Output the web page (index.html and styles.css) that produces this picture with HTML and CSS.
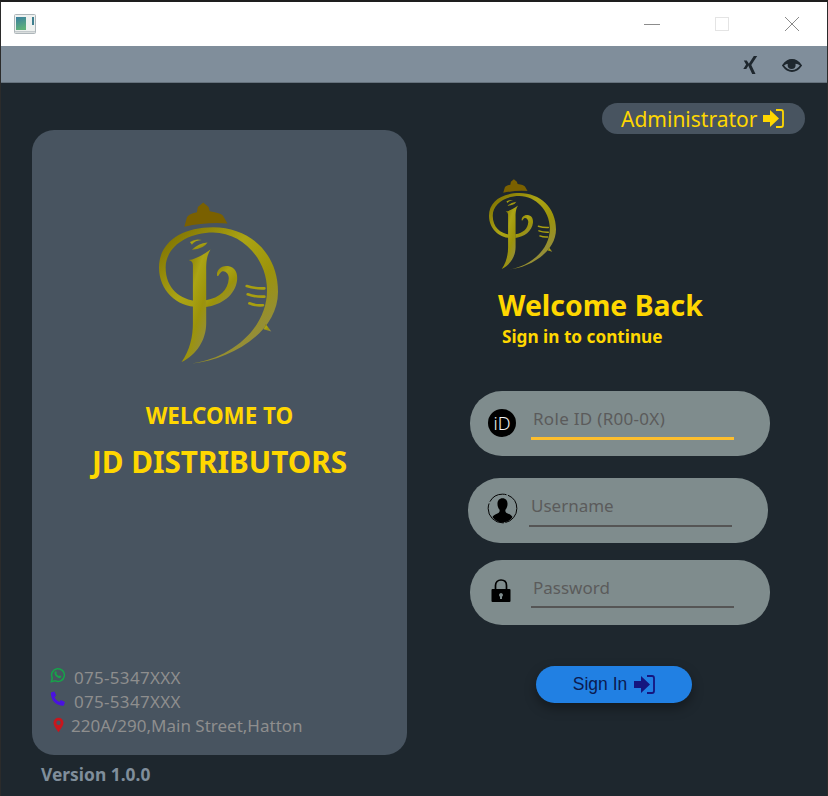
FILE: index.html
```html
<!DOCTYPE html>
<html lang="en">
<head>
<meta charset="utf-8">
<title>JD Distributors</title>
<link rel="stylesheet" href="styles.css">
</head>
<body>
<svg class="defs" width="0" height="0" aria-hidden="true">
  <defs>
    <linearGradient id="gold" x1="0.1" y1="0" x2="0.9" y2="1">
      <stop offset="0" stop-color="#7d7000"/>
      <stop offset="0.35" stop-color="#aba414"/>
      <stop offset="0.6" stop-color="#9c930a"/>
      <stop offset="1" stop-color="#8f8a5a"/>
    </linearGradient>
    <linearGradient id="panel" x1="0" y1="0" x2="0.3" y2="1">
      <stop offset="0" stop-color="#3a7fa0"/>
      <stop offset="1" stop-color="#5fb07a"/>
    </linearGradient>
    <symbol id="logo" viewBox="87 37 358 484">
      <g fill="url(#gold)">
        <path fill="#7a6000" d="M163 110 L171 82 Q174 72 201 66 L204 50 L220 37 L236 50 L240 63 Q272 68 279 76 L293 100 Q230 95 163 110 Z"/>
        <path d="M188 521 C300 510 445 430 445 305 C445 190 360 111 250 111 C150 111 87 160 87 232 C87 300 140 351 205 351 L205 334 C150 329 107 295 107 232 C107 172 170 127 250 127 C335 127 412 205 412 300 C412 420 300 505 188 521 Z"/>
        <path d="M176 210 C195 208 220 195 242 178 C232 195 229 210 229 240 L229 400 C229 450 200 495 155 517 C180 480 189 440 189 400 L189 225 Q189 213 176 210 Z"/>
        <path d="M228 331 C270 324 295 300 297 265 C297 250 285 240 275 245 C268 250 268 258 262 258 C258 240 275 225 295 228 C317 232 324 250 322 270 C317 315 275 346 228 351 Z"/>
        <path d="M186 179 Q205 160 233 157 Q222 176 186 179 Z"/>
        <path d="M180 156 Q195 144 216 150 Q195 151 186 164 Z"/>
        <path d="M408 402 L425 425 L402 418 Z"/>
      </g>
      <g fill="none" stroke="#a89f10" stroke-width="8" stroke-linecap="round">
        <path d="M351 288 Q375 296 404 295"/>
        <path d="M354 313 Q375 321 404 320"/>
        <path d="M359 340 Q378 348 400 346"/>
      </g>
    </symbol>
    <symbol id="signin" viewBox="0 0 21 19">
      <path d="M0 6 H7 V1 L16 9.500 L7 18 V13 H0 Z"/>
      <path d="M13 1 H18 Q20 1 20 3 V16 Q20 18 18 18 H13" fill="none" stroke="currentColor" stroke-width="1.800"/>
    </symbol>
  </defs>
</svg>

<div class="window">
  <span class="edge edge-l1"></span>
  <span class="edge edge-l2"></span>
  <span class="edge edge-l3"></span>
  <span class="edge edge-r1"></span>
  <header class="titlebar">
    <svg class="app-icon" viewBox="0 0 22 20">
      <rect x="0.5" y="0.5" width="21" height="19" rx="1" fill="#eef1ef" stroke="#aeb6ba"/>
      <rect x="2" y="3" width="10" height="13" fill="url(#panel)"/>
      <rect x="18" y="3" width="2" height="8" fill="#3f7f8f"/>
      <rect x="1" y="17" width="20" height="1.500" fill="#c3c9cc"/>
    </svg>
    <div class="win-controls">
      <svg class="win-btn" viewBox="0 0 16 16"><path d="M0 8.500H16" stroke="#8c8c8c" fill="none"/></svg>
      <svg class="win-btn" viewBox="0 0 16 16"><rect x="1.500" y="1.500" width="13" height="13" fill="none" stroke="#e4e4e4"/></svg>
      <svg class="win-btn" viewBox="0 0 16 16"><path d="M1 1L15 15M15 1L1 15" stroke="#8a8a8a" fill="none"/></svg>
    </div>
  </header>

  <div class="toolbar">
    <svg class="tool-icon xing" viewBox="0 0 15 18">
      <path fill="#1e272e" d="M0.800 4.500H3.800L6.200 8.300L3.300 13H0.300L3.100 8.400Z"/>
      <path fill="#1e272e" d="M10.800 0H14.200L8.300 9L12.500 18H9.200L5 9Z"/>
    </svg>
    <svg class="tool-icon eye" viewBox="0 0 20 13">
      <path fill="none" stroke="#1e272e" stroke-width="1.800" d="M1 6.500C4 2.200 7 1 10 1S16 2.200 19 6.500C16 10.800 13 12 10 12S4 10.800 1 6.500Z"/>
      <path fill="#1e272e" d="M1 6.500C4 2.200 7 0.600 10 0.600S16 2.200 19 6.500C15 3.800 5 3.800 1 6.500Z"/>
      <circle cx="9.600" cy="6" r="4" fill="#1e272e"/>
    </svg>
  </div>

  <main class="main">
    <div class="left-col">
      <section class="card">
        <svg class="logo-large"><use href="#logo"/></svg>
        <h2 class="welcome-to">WELCOME TO</h2>
        <h1 class="company">JD DISTRIBUTORS</h1>
        <ul class="contacts">
          <li class="contact">
            <svg class="c-icon" viewBox="0 0 18 18">
              <path fill="none" stroke="#17a34a" stroke-width="1.700" d="M1.500 16.500L2.600 12.400A7.200 7.200 0 1 1 5.500 15.400Z"/>
              <path fill="#17a34a" d="M6.300 4.900C7 4.600 7.300 5 7.600 6.200C7.800 6.900 7 7.200 7.200 7.700C7.700 8.700 8.600 9.600 9.900 10.200C10.400 10.300 10.700 9.400 11.300 9.600C12.600 10.200 13 10.500 12.700 11.300C12.300 12.400 10.800 12.900 9.600 12.400C7.500 11.600 5.900 10 5.100 7.900C4.700 6.600 5.200 5.400 6.300 4.900Z"/>
            </svg>
            <span class="phone">075-5347XXX</span>
          </li>
          <li class="contact">
            <svg class="c-icon" viewBox="0 0 18 18">
              <path fill="#4a12e0" d="M1.500 1.500L5 0.600L7 5L5 6.800C6 9.200 8 11.200 10.500 12.400L12.300 10.200L16.800 12.300L15.800 15.800C15.700 16.400 15.200 16.600 14.700 16.600C7.200 16.600 1 10.300 1 2.700C1 2.100 1.100 1.700 1.500 1.500Z"/>
            </svg>
            <span class="phone">075-5347XXX</span>
          </li>
          <li class="contact contact-address">
            <svg class="pin-icon" viewBox="0 0 12 17">
              <path fill="#c8161d" fill-rule="evenodd" d="M6 0.500A5.500 5.500 0 0 0 0.500 6C0.500 9 4 13.500 6 16.500C8 13.500 11.500 9 11.500 6A5.500 5.500 0 0 0 6 0.500ZM6 3.600A2.400 2.400 0 1 1 6 8.400A2.400 2.400 0 1 1 6 3.600Z"/>
            </svg>
            <span>220A/290,Main Street,Hatton</span>
          </li>
        </ul>
      </section>
      <div class="version">Version 1.0.0</div>
    </div>

    <div class="right-col">
      <button class="admin-btn" type="button">
        <span>Administrator</span>
        <svg class="signin-icon admin-icon"><use href="#signin"/></svg>
      </button>
      <svg class="logo-small"><use href="#logo"/></svg>
      <h2 class="welcome-back">Welcome Back</h2>
      <p class="subtitle">Sign in to continue</p>

      <form class="form">
        <div class="field field-role">
          <span class="orcid">iD</span>
          <div class="input input-active">Role ID (R00-0X)</div>
        </div>
        <div class="field field-user">
          <svg class="field-icon" viewBox="0 0 32 32">
            <circle cx="16" cy="16" r="14.800" fill="none" stroke="#000" stroke-width="1" stroke-dasharray="20 1.500 30 2"/>
            <path d="M16 5.500C12.600 5.500 10.800 8 10.800 11.200C10.800 14 11.800 16 13 17.400C13.200 19 12.800 20 11.800 20.600C9.800 21.600 7.200 22.200 5.600 24.800C8 28.400 12 30.600 16 30.600S24 28.400 26.400 24.800C24.800 22.200 22.200 21.600 20.200 20.600C19.200 20 18.800 19 19 17.400C20.200 16 21.200 14 21.200 11.200C21.200 8 19.400 5.500 16 5.500Z"/>
          </svg>
          <div class="input input-user">Username</div>
        </div>
        <div class="field field-pass">
          <svg class="field-icon lock" viewBox="0 0 20 24">
            <path d="M4.500 11V6.500C4.500 3.200 6.700 1 10 1S15.500 3.200 15.500 6.500V11" fill="none" stroke="#000" stroke-width="1.700"/>
            <path fill-rule="evenodd" d="M1.500 10H18.500Q19.500 10 19.500 11V22Q19.500 23 18.500 23H1.500Q0.500 23 0.500 22V11Q0.500 10 1.500 10ZM10 14A2 2 0 0 0 9 17.700V20H11V17.700A2 2 0 0 0 10 14Z"/>
          </svg>
          <div class="input input-pass">Password</div>
        </div>
        <button class="signin-btn" type="button">
          <span>Sign In</span>
          <svg class="signin-icon btn-icon"><use href="#signin"/></svg>
        </button>
      </form>
    </div>
  </main>
</div>
</body>
</html>
```

FILE: styles.css
```css
* { box-sizing: border-box; }
html, body { margin: 0; padding: 0; background: #1e272e; }
body { font-family: "Noto Sans", "Open Sans", sans-serif; overflow: hidden; }
.defs { position: absolute; }
ul { list-style: none; margin: 0; padding: 0; }
h1, h2, p { margin: 0; }

.window {
  position: relative;
  width: 828px;
  height: 796px;
  border-top: 2px solid #1e1e1e;
  border-left: 1px solid #2b2b2b;
  border-right: 1px solid #2b2b2b;
  display: flex;
  flex-direction: column;
  overflow: hidden;
}
.edge { position: absolute; width: 1px; background: #d8d8d8; z-index: 2; }
.edge-l1 { left: -1px; top: 304px; height: 37px; }
.edge-l2 { left: -1px; top: 395px; height: 17px; }
.edge-l3 { left: -1px; top: 480px; height: 17px; }
.edge-r1 { right: -1px; top: 366px; height: 47px; background: #9a9a9a; }

.titlebar {
  height: 44px;
  flex: none;
  background: #fff;
  display: flex;
  align-items: center;
  justify-content: space-between;
  padding: 0 27px 0 8px;
}
.app-icon { width: 22px; height: 20px; margin-top: -1px; margin-left: 5px; }
.win-controls { display: flex; gap: 54px; }
.win-btn { width: 16px; height: 16px; display: block; }

.toolbar {
  height: 37px;
  flex: none;
  background: #808e9b;
  border-bottom: 1px solid #66727d;
  display: flex;
  align-items: center;
  justify-content: flex-end;
  padding: 2px 25px 0 0;
  gap: 24px;
}
.tool-icon { display: block; }
.xing { width: 15px; height: 18px; }
.eye { width: 20px; height: 13px; }

.main {
  flex: 1;
  min-height: 0;
  background: #1e272e;
  display: flex;
  padding-left: 31px;
}
.left-col { width: 375px; flex: none; padding-top: 47px; }
.card {
  width: 375px;
  height: 625px;
  background: #485460;
  border-radius: 22px;
  display: flex;
  flex-direction: column;
  align-items: center;
  padding-top: 72px;
  color: #ffd700;
}
.logo-large { width: 119px; height: 162px; margin-left: -3px; flex: none; }
.welcome-to { font-size: 22.400px; font-weight: 700; line-height: 28px; margin-top: 38px; }
.company { font-size: 29.700px; font-weight: 700; line-height: 38px; margin-top: 13px; }
.contacts { align-self: stretch; margin-top: auto; padding: 0 0 18px 18px; }
.contact {
  display: flex;
  align-items: center;
  height: 24px;
  font-size: 17px;
  font-weight: 400;
  color: #8e8e8e;
  gap: 8px;
}
.phone { letter-spacing: 0.300px; }
.c-icon { width: 16px; height: 16px; margin-top: -4px; flex: none; }
.pin-icon { width: 11px; height: 16px; margin-left: 3px; flex: none; }
.contact-address { gap: 7px; }
.version {
  font-size: 17.400px;
  font-weight: 700;
  color: #808e9b;
  margin: 7px 0 0 9px;
  line-height: 24px;
}

.right-col { flex: 1; position: relative; padding-left: 63px; }
.admin-btn {
  display: flex;
  align-items: center;
  justify-content: flex-start;
  gap: 6px;
  width: 203px;
  height: 31px;
  margin: 20px 0 0 132px;
  background: #485460;
  border: 0;
  border-radius: 16px;
  color: #ffd700;
  font: 400 21px "Noto Sans", sans-serif;
  padding: 0 0 0 19px;
}
.signin-icon { fill: currentColor; display: block; flex: none; }
.admin-icon { width: 21px; height: 19px; }
.logo-small { display: block; width: 67px; height: 91px; margin: 45px 0 0 19px; }
.welcome-back { font-size: 28.400px; font-weight: 700; line-height: 38px; color: #ffd700; margin: 16px 0 0 28px; }
.subtitle { font-size: 17.200px; font-weight: 700; line-height: 24px; color: #ffd700; margin: 1px 0 0 32px; }

.form { display: block; margin-top: 42px; }
.field {
  position: relative;
  width: 300px;
  height: 65px;
  background: #7f8c8d;
  border-radius: 32px;
  display: flex;
  align-items: flex-start;
}
.field-role { margin-left: 0; }
.field-user { margin: 22px 0 0 -2px; }
.field-pass { margin-top: 17px; }
.input {
  width: 203px;
  height: 37px;
  margin: 11px 0 0 61px;
  padding-left: 2px;
  border-bottom: 2px solid #555;
  color: #5b5b5b;
  font-size: 17px;
  font-weight: 400;
  line-height: 35px;
}
.input-active { border-bottom: 3px solid #fdbe2d; height: 38px; line-height: 34px; letter-spacing: 0.300px; }
.input-user { height: 38px; line-height: 34px; }
.input-pass { line-height: 33px; }
.orcid {
  position: absolute;
  left: 18px;
  top: 18px;
  width: 28px;
  height: 28px;
  border-radius: 50%;
  background: #000;
  color: #f2f2f2;
  font: 300 18px/28px "Noto Sans", sans-serif;
  text-align: center;
}
.field-icon { position: absolute; left: 19px; top: 15px; width: 31px; height: 31px; }
.lock { left: 21px; top: 19px; width: 20px; height: 24px; }

.signin-btn {
  display: flex;
  align-items: center;
  justify-content: center;
  gap: 7px;
  width: 156px;
  height: 37px;
  margin: 41px 0 0 66px;
  background: #2180e3;
  border: 0;
  border-radius: 19px;
  box-shadow: 0 5px 12px rgba(0, 0, 0, 0.35);
  color: #0b1a50;
  font: 400 17.500px/39px "Liberation Sans", sans-serif;
  padding: 0;
}
.btn-icon { width: 21px; height: 19px; color: #15157f; fill: #15157f; }
```
